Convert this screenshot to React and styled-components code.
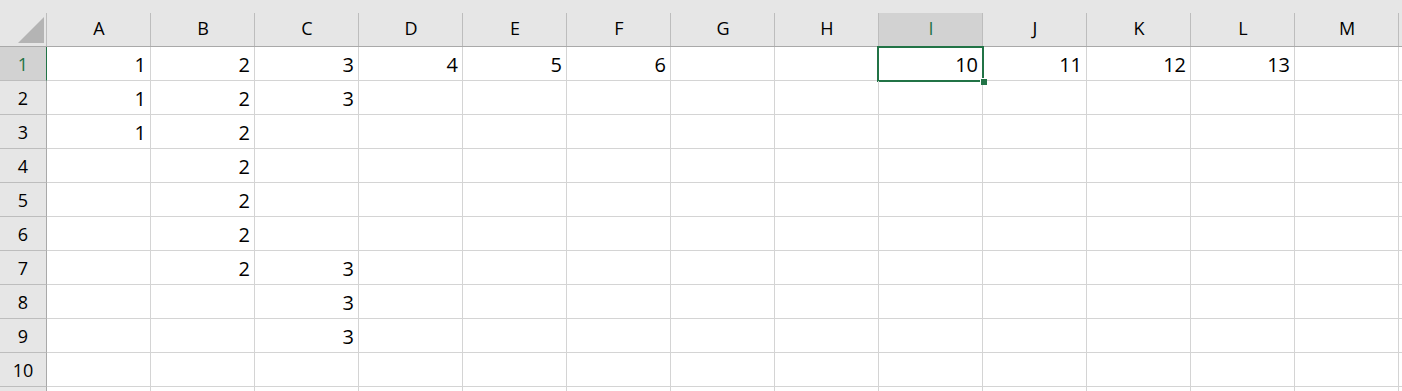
import React from "react";
import styled, { createGlobalStyle, css } from "styled-components";

const GlobalStyle = createGlobalStyle`
  html, body {
    margin: 0;
    padding: 0;
    background: #ffffff;
    overflow: hidden;
  }
  body {
    font-family: "Open Sans", "Noto Sans", sans-serif;
  }
`;

// last column / row only peek in at the window edge, so they carry no label
const COLS = ["A", "B", "C", "D", "E", "F", "G", "H", "I", "J", "K", "L", "M", ""];
const ROWS = [1, 2, 3, 4, 5, 6, 7, 8, 9, 10, ""];

const data = {
  1: { A: 1, B: 2, C: 3, D: 4, E: 5, F: 6, I: 10, J: 11, K: 12, L: 13 },
  2: { A: 1, B: 2, C: 3 },
  3: { A: 1, B: 2 },
  4: { B: 2 },
  5: { B: 2 },
  6: { B: 2 },
  7: { B: 2, C: 3 },
  8: { C: 3 },
  9: { C: 3 },
};

const active = { row: 1, col: "I" };

const Sheet = styled.div`
  display: grid;
  grid-template-columns: 47px repeat(${COLS.length}, 104px);
  grid-template-rows: 47px repeat(${ROWS.length}, 34px);
  width: 1402px;
  height: 391px;
  overflow: hidden;
`;

const Corner = styled.div`
  box-sizing: border-box;
  background-color: #e6e6e6;
  background-image: linear-gradient(#bdbdbd, #bdbdbd);
  background-size: 1px 33px;
  background-position: right bottom;
  background-repeat: no-repeat;
  border-bottom: 1px solid #a9a9a9;
  display: flex;
  align-items: flex-end;
  justify-content: flex-end;
  padding: 0 3px 3px 0;
`;

const Triangle = styled.div`
  width: 26px;
  height: 26px;
  background: #b4b4b4;
  clip-path: polygon(100% 0, 100% 100%, 0 100%);
`;

const ColHead = styled.div`
  box-sizing: border-box;
  background-color: #e6e6e6;
  background-image: linear-gradient(#bdbdbd, #bdbdbd)
    ${(p) => (p.$sel ? ", linear-gradient(#d2d2d2, #d2d2d2)" : "")};
  background-size: 1px 33px ${(p) => (p.$sel ? ", 100% 33px" : "")};
  background-position: right bottom ${(p) => (p.$sel ? ", left bottom" : "")};
  background-repeat: no-repeat;
  border-bottom: 1px solid ${(p) => (p.$sel ? "#217346" : "#a9a9a9")};
  display: flex;
  align-items: flex-end;
  justify-content: center;
  padding-bottom: 8px;
  font-size: 18px;
  line-height: 20px;
  color: ${(p) => (p.$sel ? "#217346" : "#000")};
`;

const RowHead = styled.div`
  box-sizing: border-box;
  background: ${(p) => (p.$sel ? "#d2d2d2" : "#e6e6e6")};
  border-bottom: 1px solid #bdbdbd;
  border-right: 1px solid ${(p) => (p.$sel ? "#217346" : "#a9a9a9")};
  display: flex;
  align-items: center;
  justify-content: center;
  font-size: 18px;
  color: ${(p) => (p.$sel ? "#217346" : "#000")};
`;

const Cell = styled.div`
  position: relative;
  box-sizing: border-box;
  border-right: 1px solid #d4d4d4;
  border-bottom: 1px solid #d4d4d4;
  display: flex;
  align-items: flex-end;
  justify-content: flex-end;
  padding: 0 4px 3px 0;
  font-size: 20px;
  line-height: 24px;
  color: #000;
  ${(p) =>
    p.$active &&
    css`
      &::before {
        content: "";
        position: absolute;
        left: -2px;
        top: -1px;
        right: -2px;
        bottom: -2px;
        border: 2px solid #217346;
        pointer-events: none;
      }
      &::after {
        content: "";
        position: absolute;
        right: -5px;
        bottom: -5px;
        width: 6px;
        height: 6px;
        background: #217346;
        border-top: 1px solid #fff;
        border-left: 1px solid #fff;
        z-index: 1;
      }
    `}
`;

export default function App() {
  return (
    <>
      <GlobalStyle />
      <Sheet>
        <Corner>
          <Triangle />
        </Corner>
        {COLS.map((c, i) => (
          <ColHead key={i} $sel={c === active.col}>
            {c}
          </ColHead>
        ))}
        {ROWS.map((r, ri) => (
          <React.Fragment key={ri}>
            <RowHead $sel={r === active.row}>{r}</RowHead>
            {COLS.map((c, ci) => (
              <Cell key={ci} $active={r === active.row && c === active.col}>
                {data[r] && data[r][c] !== undefined ? data[r][c] : ""}
              </Cell>
            ))}
          </React.Fragment>
        ))}
      </Sheet>
    </>
  );
}
